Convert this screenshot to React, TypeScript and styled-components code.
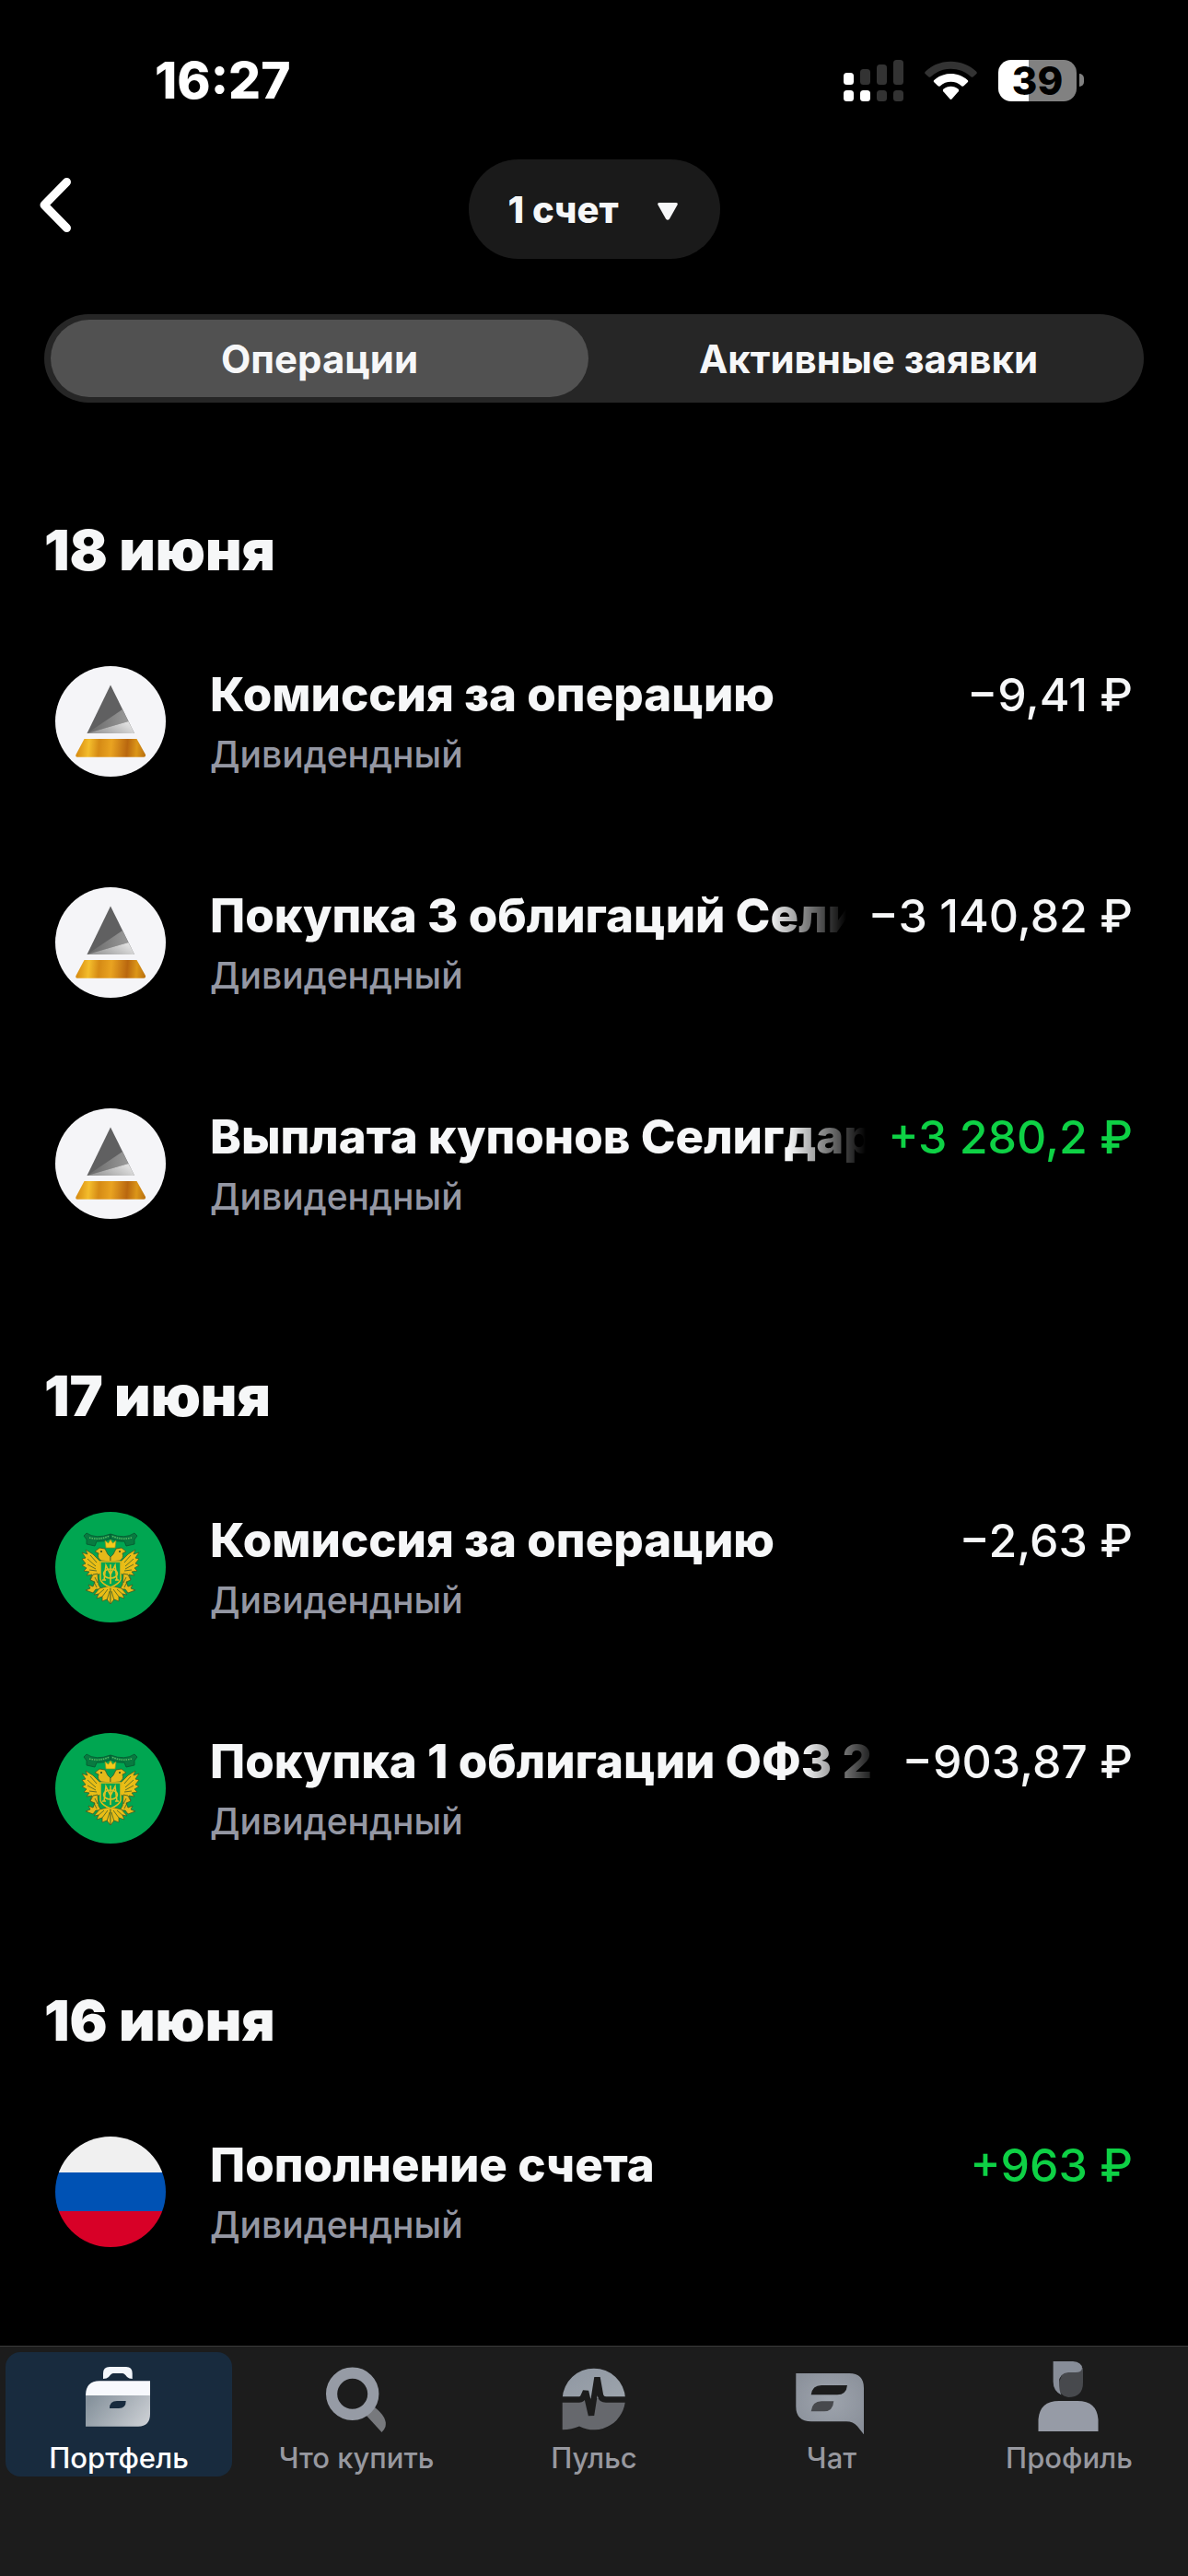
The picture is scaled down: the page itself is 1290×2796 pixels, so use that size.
import React from 'react';
import styled, { createGlobalStyle } from 'styled-components';

const GlobalStyle = createGlobalStyle`
  *, *::before, *::after { box-sizing: border-box; }
  body {
    margin: 0;
    background: #000;
    color: #f6f7f8;
    font-family: Inter, Roboto, "Noto Sans", sans-serif;
  }
  h2, ul, p { margin: 0; padding: 0; }
  button, select { font: inherit; color: inherit; border: 0; background: none; padding: 0; }
  svg { display: block; }
`;

const Page = styled.div`
  min-height: 100vh;
  display: flex;
  flex-direction: column;
`;

const StatusBar = styled.header`
  display: flex;
  justify-content: space-between;
  align-items: center;
  padding: 54px 113px 53px 168px;
`;

const Clock = styled.time`
  font-size: 55px;
  line-height: 66px;
  font-weight: 800;
  color: #fff;
`;

const StatusIcons = styled.div`
  display: flex;
  align-items: center;
  gap: 23px;
`;

const Battery = styled.div`
  display: flex;
  align-items: center;
  gap: 3px;
`;

const BatteryBody = styled.div<{ $level: number }>`
  width: 85px;
  height: 45px;
  border-radius: 14px;
  background: linear-gradient(to right, #fff ${(p) => p.$level}%, #818181 ${(p) => p.$level}%);
  color: #000;
  font-size: 42px;
  line-height: 45px;
  font-weight: 800;
  text-align: center;
`;

const BatteryNub = styled.div`
  width: 5px;
  height: 14px;
  border-radius: 0 5px 5px 0;
  background: #818181;
`;

const TopBar = styled.div`
  display: grid;
  grid-template-columns: 1fr auto 1fr;
  align-items: center;
  padding: 0 36px;
`;

const BackButton = styled.button`
  justify-self: start;
  width: 60px;
  height: 100px;
  cursor: pointer;
`;

const AccountPicker = styled.label`
  position: relative;
`;

const AccountSelect = styled.select`
  appearance: none;
  width: 273px;
  height: 108px;
  padding: 0 90px 0 43px;
  border-radius: 54px;
  background: #1a1a1a;
  font-size: 40px;
  font-weight: 800;
`;

const PickerArrow = styled.svg`
  position: absolute;
  right: 46px;
  top: 47px;
  pointer-events: none;
`;

const Segments = styled.div`
  display: grid;
  grid-template-columns: 1fr 1fr;
  gap: 12px;
  margin: 60px 48px 28px;
  padding: 6px 7px;
  border-radius: 48px;
  background: #262626;
`;

const Segment = styled.button<{ $active?: boolean }>`
  height: 84px;
  border-radius: 42px;
  background: ${(p) => (p.$active ? '#515151' : 'transparent')};
  font-size: 42px;
  font-weight: 700;
  cursor: pointer;
`;

const Feed = styled.main`
  flex: 1;
`;

const DayTitle = styled.h2`
  padding: 96px 48px 30px;
  font-size: 61px;
  line-height: 72px;
  font-weight: 900;
`;

const Rows = styled.ul`
  list-style: none;
`;

const Row = styled.li`
  display: flex;
  gap: 48px;
  padding: 60px;
`;

const RowBody = styled.div`
  flex: 1;
  min-width: 0;
  display: flex;
  flex-direction: column;
  gap: 10px;
`;

const RowHead = styled.div`
  display: flex;
  gap: 24px;
  line-height: 62px;
  white-space: nowrap;
`;

const RowTitle = styled.p`
  flex: 1;
  min-width: 0;
  overflow: hidden;
  font-size: 51px;
  font-weight: 800;
  mask-image: linear-gradient(to left, transparent, #000 84px);
`;

const Amount = styled.p<{ $income?: boolean }>`
  font-size: 50px;
  font-weight: 500;
  color: ${(p) => (p.$income ? '#0ed145' : '#f6f7f8')};
`;

const RowNote = styled.p`
  font-size: 39px;
  line-height: 48px;
  font-weight: 500;
  color: #9497a3;
`;

const TabBar = styled.nav`
  display: grid;
  grid-template-columns: repeat(5, 1fr);
  padding: 6px 0 108px;
  border-top: 1px solid #3a3a3a;
  background: #1c1c1c;
`;

const TabLink = styled.a<{ $active?: boolean }>`
  display: flex;
  flex-direction: column;
  align-items: center;
  gap: 8px;
  margin: 0 6px;
  padding: 5px 0 2px;
  border-radius: 16px;
  background: ${(p) => (p.$active ? '#182b3e' : 'transparent')};
  color: ${(p) => (p.$active ? '#fff' : '#97989f')};
  font-size: 31px;
  line-height: 36px;
  font-weight: 500;
  text-decoration: none;
`;

const Signal = () => (
  <svg width="65" height="45" viewBox="0 0 65 45" aria-hidden="true">
    <g fill="#fff">
      <rect x="0" y="14" width="11" height="13" rx="3.5" />
      <rect x="0" y="33" width="11" height="12" rx="3.5" />
      <rect x="18" y="33" width="11" height="12" rx="3.5" />
    </g>
    <g fill="#333">
      <rect x="18" y="10" width="11" height="17" rx="3.5" />
      <rect x="36" y="5" width="11" height="22" rx="3.5" />
      <rect x="54" y="0" width="11" height="27" rx="3.5" />
      <rect x="36" y="33" width="11" height="12" rx="3.5" />
      <rect x="54" y="33" width="11" height="12" rx="3.5" />
    </g>
  </svg>
);

const Wifi = () => (
  <svg width="57" height="43" viewBox="0 0 57 43" aria-hidden="true">
    <path d="M1 11.5C16 -3 41 -3 56 11.5Q57.5 13 56.2 14.3L52.5 17.6Q51.5 18.3 50.3 17.2C38 6 19 6 6.700 17.200Q5.500 18.300 4.500 17.600L.8 14.300Q-.5 13 1 11.500Z" fill="#333" />
    <path d="M10.300 21C20.500 11.700 36.500 11.700 46.700 21Q47.800 22.200 46.700 23.300L42.500 27.300Q41.300 28.300 40 27.200C33.500 21.300 23.500 21.300 17 27.200Q15.700 28.300 14.500 27.300L10.300 23.300Q9.200 22.200 10.300 21Z" fill="#fff" />
    <path d="M20.300 30.800C25 26.700 32 26.700 36.700 30.800Q37.800 31.900 36.700 33.200L29.500 41.600Q28.500 42.500 27.500 41.600L20.300 33.200Q19.200 31.900 20.300 30.800Z" fill="#fff" />
  </svg>
);

const Seligdar = () => (
  <svg width="120" height="120" viewBox="0 0 120 120" aria-hidden="true">
    <defs>
      <linearGradient id="gold" gradientUnits="userSpaceOnUse" x1="24" y1="86" x2="97" y2="92">
        <stop offset="0" stopColor="#d78c12" />
        <stop offset=".17" stopColor="#f4bd2c" />
        <stop offset=".32" stopColor="#d58a15" />
        <stop offset=".5" stopColor="#e9a321" />
        <stop offset=".74" stopColor="#b9670f" />
        <stop offset=".88" stopColor="#dc9618" />
        <stop offset="1" stopColor="#bd7410" />
      </linearGradient>
      <linearGradient id="steel" x1="0" y1="1" x2="1" y2=".6">
        <stop offset="0" stopColor="#8b8b8b" />
        <stop offset="1" stopColor="#dedede" />
      </linearGradient>
      <linearGradient id="slate" x1="0" y1="0" x2="1" y2="0">
        <stop offset="0" stopColor="#666" />
        <stop offset="1" stopColor="#9a9a9a" />
      </linearGradient>
    </defs>
    <circle cx="60" cy="60" r="60" fill="#f5f5f8" />
    <path d="M60 20.500L86 73H34.500Z" fill="#606061" />
    <path d="M73 47L79.500 60L34.500 73Z" fill="url(#slate)" />
    <path d="M79.500 60L86 73H34.500Z" fill="url(#steel)" />
    <path d="M31.500 79H88.500L98 96Q98.500 98.700 96 98.700H24Q21.500 98.700 22.500 96Z" fill="url(#gold)" />
  </svg>
);

const WingHalf = () => (
  <g strokeLinejoin="round" strokeWidth=".8">
    <path d="M60 24Q44 30 34 23L31 26L34 30V35L43 37L45 32Q53 33 60 29Z" fill="#087a40" stroke="#06562f" />
    <path d="M37 28Q48 31 59 26" fill="none" stroke="#59b75f" strokeWidth="1.500" strokeDasharray="1.500 1" />
    <path d="M49 54L41 46L33 41L35 46L29 44L33 50L29 51L33 56L29 58L34 61L31 64L37 65L34 69L40 68L38 73L44 70L50 66Z" fill="#e9bd16" stroke="#40602a" />
    <path d="M38 47L45 55M35 51L44 59M35 57L44 62M37 63L45 64" fill="none" stroke="#40602a" />
    <path d="M50 53Q45 50 47 45L43 43L48 39L54 40L57 46L60 49V54Z" fill="#e4b91a" stroke="#385c27" />
    <circle cx="50" cy="43" r="1" fill="#1d4a27" />
    <path d="M46 67L41 68L38 74L43 76L41 81L36 79L38 83L33 85L41 88L44 84L50 84L47 79Z" fill="#e4b91a" stroke="#385c27" />
    <path d="M43 71L46 77M42 76L45 82" stroke="#385c27" />
    <path d="M56 81L48 83L42 90L47 89L45 94L51 92L51 97L56 95L60 100V82Z" fill="#e9bd16" stroke="#40602a" />
    <path d="M57 84L51 92M59 86L56 96M53 84L46 90" stroke="#40602a" />
  </g>
);

const Treasury = () => (
  <svg width="120" height="120" viewBox="0 0 120 120" aria-hidden="true">
    <circle cx="60" cy="60" r="60" fill="#00a651" />
    <WingHalf />
    <g transform="translate(120 0) scale(-1 1)">
      <WingHalf />
    </g>
    <path d="M54 31L57.500 34L60 30L62.500 34L66 31L65 39H55Z" fill="#f5cb1a" stroke="#8c9020" strokeWidth=".7" />
    <path d="M49 54H71V73Q70 78 60 82Q50 78 49 73Z" fill="#00a651" stroke="#e3ba1a" strokeWidth="1.500" />
    <g fill="none" stroke="#dfc124" strokeWidth="1.600">
      <path d="M53 74L55 58L60 68L65 58L67 74M60 57V78M51 74H55M65 74H69" />
      <ellipse cx="60" cy="67" rx="7.500" ry="5" />
    </g>
  </svg>
);

const RussianFlag = () => (
  <svg width="120" height="120" viewBox="0 0 120 120" aria-hidden="true">
    <clipPath id="flag"><circle cx="60" cy="60" r="60" /></clipPath>
    <g clipPath="url(#flag)">
      <path d="M0 0H120V39H0Z" fill="#f0f0f0" />
      <path d="M0 39H120V81H0Z" fill="#0052b4" />
      <path d="M0 81H120V120H0Z" fill="#d80027" />
    </g>
  </svg>
);

const TabIcon = ({ children }: { children: React.ReactNode }) => (
  <svg width="84" height="84" viewBox="0 0 84 84" aria-hidden="true">{children}</svg>
);

const PortfolioIcon = () => (
  <TabIcon>
    <defs>
      <linearGradient id="case" x1="0" y1=".3" x2="1" y2=".7">
        <stop offset="0" stopColor="#87939d" />
        <stop offset="1" stopColor="#c9cdd2" />
      </linearGradient>
    </defs>
    <path d="M25 24V18Q25 11 32 11H50Q56.700 11 56.700 18V24Q53 24 51 22Q48 18 46 18H36Q34 18 31 22Q29 24 25 24Z" fill="#f3f6fb" />
    <path d="M6 42Q6 26.300 21 26.300H76V42Z" fill="#f7f9fd" />
    <path d="M6 42H76V62Q76 75.700 63 75.700H6Z" fill="url(#case)" />
    <path d="M32 56Q32 48 40 48H49.700Q49.700 56 42 56Z" fill="#182b3e" />
  </TabIcon>
);

const SearchIcon = () => (
  <TabIcon>
    <path d="M53 64L62 55Q76 66 73.500 76Q72.500 79 69.500 82Z" fill="#77797d" />
    <circle cx="37.700" cy="40.300" r="22.600" fill="none" stroke="#969ba5" strokeWidth="12.200" />
  </TabIcon>
);

const PulseIcon = () => (
  <TabIcon>
    <defs>
      <linearGradient id="dome" x1="0" y1="0" x2="1" y2="1">
        <stop offset="0" stopColor="#8f97a2" />
        <stop offset="1" stopColor="#9da4ac" />
      </linearGradient>
    </defs>
    <path d="M7.700 45A34.200 34.200 0 0 1 76 45Z" fill="url(#dome)" />
    <path d="M7.700 45H76A34.200 34.200 0 0 1 26 75.500Q18 79 7.700 79.300Z" fill="#66686d" />
    <path d="M6 46.500H26Q29.500 46.500 31 42L33 37.500L39 63.500L45.500 22.500L49 42Q50 46.500 55 46.500H78" fill="none" stroke="#1c1c1c" strokeWidth="6.500" strokeLinejoin="bevel" />
  </TabIcon>
);

const ChatIcon = () => (
  <TabIcon>
    <defs>
      <radialGradient id="bubble" cx=".5" cy=".45" r=".7">
        <stop offset="0" stopColor="#9ea4ad" />
        <stop offset="1" stopColor="#888e98" />
      </radialGradient>
    </defs>
    <path d="M3.300 18H61Q77 18 77 34V84.300L70 75.500Q65.500 70.300 58 70.300H20Q3.300 70.300 3.300 54Z" fill="url(#bubble)" />
    <path d="M19.700 41.300Q21 31 31 31H59Q58 41.300 48 41.300Z" fill="#1c1c1c" />
    <path d="M19.700 59.300Q21 48.300 31 48.300H44.300Q43.500 59.300 34 59.300Z" fill="#47494d" />
  </TabIcon>
);

const ProfileIcon = () => (
  <TabIcon>
    <path d="M57 12V28Q57 44 41 44Q30 42 30 30L36 15Z" fill="#47494d" />
    <path d="M24.600 5H46Q56 6 56 12.500Q55.500 17 49 17H41Q31 18 31 28Q31 37 33.500 41.500Q24.600 37 24.600 27Z" fill="#878d98" />
    <path d="M8.500 81V68Q10 48 31 48H51Q72 48 73.500 68V81Z" fill="#969ba6" />
  </TabIcon>
);

const logos = { seligdar: Seligdar, treasury: Treasury, flag: RussianFlag };

type Operation = {
  logo: keyof typeof logos;
  title: string;
  amount: string;
  income?: boolean;
};

const days: { date: string; operations: Operation[] }[] = [
  {
    date: '18 июня',
    operations: [
      { logo: 'seligdar', title: 'Комиссия за операцию', amount: '−9,41 ₽' },
      { logo: 'seligdar', title: 'Покупка 3 облигаций Сели', amount: '−3 140,82 ₽' },
      { logo: 'seligdar', title: 'Выплата купонов Селигдар', amount: '+3 280,2 ₽', income: true },
    ],
  },
  {
    date: '17 июня',
    operations: [
      { logo: 'treasury', title: 'Комиссия за операцию', amount: '−2,63 ₽' },
      { logo: 'treasury', title: 'Покупка 1 облигации ОФЗ 2', amount: '−903,87 ₽' },
    ],
  },
  {
    date: '16 июня',
    operations: [{ logo: 'flag', title: 'Пополнение счета', amount: '+963 ₽', income: true }],
  },
];

const tabs = [
  { label: 'Портфель', Icon: PortfolioIcon },
  { label: 'Что купить', Icon: SearchIcon },
  { label: 'Пульс', Icon: PulseIcon },
  { label: 'Чат', Icon: ChatIcon },
  { label: 'Профиль', Icon: ProfileIcon },
];

const segments = ['Операции', 'Активные заявки'];

export default function App() {
  const [segment, setSegment] = React.useState(0);
  return (
    <Page>
      <GlobalStyle />
      <StatusBar>
        <Clock>16:27</Clock>
        <StatusIcons>
          <Signal />
          <Wifi />
          <Battery>
            <BatteryBody $level={39}>39</BatteryBody>
            <BatteryNub />
          </Battery>
        </StatusIcons>
      </StatusBar>

      <TopBar>
        <BackButton type="button" aria-label="Назад">
          <svg width="48" height="90" viewBox="0 0 48 90" fill="none" stroke="#fff" strokeWidth="9" strokeLinecap="round" strokeLinejoin="round" aria-hidden="true">
            <path d="M36.500 15.500L12 40.500L36.500 65.500" />
          </svg>
        </BackButton>
        <AccountPicker>
          <AccountSelect aria-label="Счет">
            <option>1 счет</option>
          </AccountSelect>
          <PickerArrow width="22" height="19" viewBox="0 0 22 19" aria-hidden="true">
            <path d="M2 0H20Q22.500 0 21.500 2.500L13 17.500Q11 20 9 17.500L.5 2.500Q-.5 0 2 0Z" fill="#f6f7f8" />
          </PickerArrow>
        </AccountPicker>
      </TopBar>

      <Segments role="tablist">
        {segments.map((name, i) => (
          <Segment key={name} type="button" role="tab" aria-selected={segment === i} $active={segment === i} onClick={() => setSegment(i)}>
            {name}
          </Segment>
        ))}
      </Segments>

      <Feed>
        {days.map((day) => (
          <section key={day.date}>
            <DayTitle>{day.date}</DayTitle>
            <Rows>
              {day.operations.map((op) => {
                const Logo = logos[op.logo];
                return (
                  <Row key={op.title}>
                    <Logo />
                    <RowBody>
                      <RowHead>
                        <RowTitle>{op.title}</RowTitle>
                        <Amount $income={op.income}>{op.amount}</Amount>
                      </RowHead>
                      <RowNote>Дивидендный</RowNote>
                    </RowBody>
                  </Row>
                );
              })}
            </Rows>
          </section>
        ))}
      </Feed>

      <TabBar>
        {tabs.map(({ label, Icon }, i) => (
          <TabLink key={label} href="#" $active={i === 0} aria-current={i === 0 ? 'page' : undefined}>
            <Icon />
            {label}
          </TabLink>
        ))}
      </TabBar>
    </Page>
  );
}
